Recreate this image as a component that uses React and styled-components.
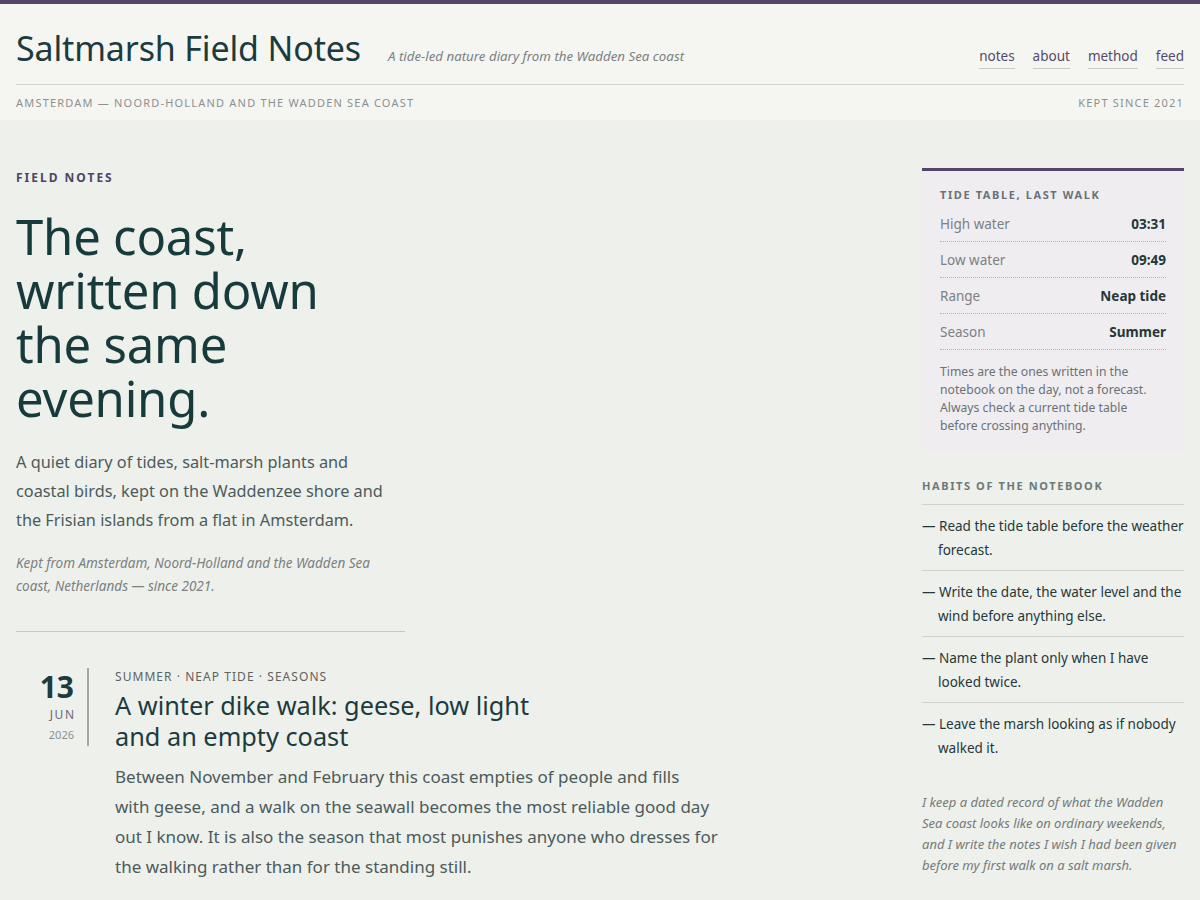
import React from 'react';
import styled, { createGlobalStyle } from 'styled-components';

const GlobalStyle = createGlobalStyle`
  html, body {
    margin: 0;
    padding: 0;
    background: #eef0eb;
    font-family: "Noto Sans", "Open Sans", sans-serif;
    color: #1f3d3d;
  }
  * { box-sizing: border-box; }
`;

const Header = styled.header`
  background: #f5f6f2;
  border-top: 4px solid #56456b;
  padding: 24px 16px 9px;
`;

const Masthead = styled.div`
  display: flex;
  align-items: baseline;
  padding-bottom: 15px;
  border-bottom: 1px solid #d3d6d1;
`;

const SiteTitle = styled.h1`
  margin: 0;
  font-size: 34px;
  line-height: 1.2;
  font-weight: 400;
  letter-spacing: -0.15px;
  color: #1c3b3d;
`;

const Tagline = styled.span`
  margin-left: 27px;
  font-size: 13.3px;
  font-style: italic;
  color: #7b8180;
`;

const Nav = styled.nav`
  margin-left: auto;
  display: flex;
  gap: 18px;
`;

const NavLink = styled.a`
  font-size: 13.5px;
  color: #55496a;
  text-decoration: none;
  padding-bottom: 3px;
  border-bottom: 1px solid #c9cbc7;
`;

const SubLine = styled.div`
  display: flex;
  justify-content: space-between;
  margin-top: 10px;
  font-size: 11px;
  line-height: 16px;
  letter-spacing: 1.2px;
  text-transform: uppercase;
  color: #8b918f;
`;

const Layout = styled.main`
  display: grid;
  grid-template-columns: 1fr 262px;
  gap: 40px;
  padding: 48px 16px 40px;
`;

const Primary = styled.div`
  min-width: 0;
  padding-top: 1px;
`;

const Intro = styled.section`
  width: 389px;
  padding-bottom: 33px;
  border-bottom: 1px solid #c6c9c4;
`;

const Kicker = styled.div`
  font-size: 12px;
  line-height: 18px;
  font-weight: 700;
  letter-spacing: 2px;
  text-transform: uppercase;
  color: #4f4561;
`;

const Hero = styled.h2`
  margin: 22px 0 0;
  font-size: 49px;
  line-height: 54px;
  font-weight: 400;
  letter-spacing: -0.2px;
  color: #173a3b;
`;

const Lede = styled.p`
  margin: 23px 0 0;
  font-size: 16.3px;
  line-height: 29px;
  color: #4b5b5b;
`;

const Aside = styled.p`
  margin: 17px 0 0;
  font-size: 13.5px;
  line-height: 23px;
  font-style: italic;
  color: #7a8180;
`;

const Entry = styled.article`
  display: flex;
  gap: 26px;
  margin-top: 36px;
`;

const DateBlock = styled.div`
  width: 73px;
  flex-shrink: 0;
  align-self: flex-start;
  padding-right: 13px;
  border-right: 2px solid #a6a8a5;
  text-align: right;
`;

const Day = styled.div`
  font-size: 30px;
  line-height: 38px;
  font-weight: 700;
  color: #1c3b3d;
`;

const Month = styled.div`
  font-size: 12px;
  line-height: 18px;
  letter-spacing: 1.5px;
  margin-right: -1.5px;
  color: #6e6680;
`;

const Year = styled.div`
  font-size: 11px;
  line-height: 22px;
  color: #8b918f;
`;

const EntryBody = styled.div`
  max-width: 603px;
`;

const Meta = styled.div`
  font-size: 12px;
  line-height: 18px;
  letter-spacing: 1.05px;
  text-transform: uppercase;
  color: #5d6363;
`;

const EntryTitle = styled.h3`
  margin: 4px 0 0;
  max-width: 440px;
  font-size: 25.3px;
  line-height: 31px;
  font-weight: 400;
  color: #1c3b3d;
`;

const EntryText = styled.p`
  margin: 10px 0 0;
  font-size: 17px;
  line-height: 30px;
  color: #4b5b5b;
`;

const Sidebar = styled.aside`
  display: flex;
  flex-direction: column;
`;

const TideBox = styled.section`
  background: #efedf0;
  border-top: 3px solid #56456b;
  padding: 16px 18px 17px;
`;

const BoxLabel = styled.div`
  font-size: 11px;
  line-height: 16px;
  font-weight: 700;
  letter-spacing: 1.6px;
  text-transform: uppercase;
  color: ${(p) => p.$color || '#6b7177'};
`;

const TideRows = styled.dl`
  margin: 3px 0 0;
`;

const TideRow = styled.div`
  display: flex;
  justify-content: space-between;
  padding: 8px 0 7px;
  border-bottom: 1px dotted #b4b3b8;
  font-size: 13.5px;
  line-height: 20px;
`;

const TideKey = styled.dt`
  color: #7b8184;
`;

const TideValue = styled.dd`
  margin: 0;
  font-weight: 700;
  color: #253839;
`;

const TideNote = styled.p`
  margin: 13px 0 0;
  font-size: 12.2px;
  line-height: 18px;
  color: #6b7177;
`;

const Habits = styled.section`
  margin-top: 26px;
`;

const HabitList = styled.ul`
  list-style: none;
  margin: 10px 0 0;
  padding: 0;
  border-top: 1px solid #cfd2cd;
`;

const Habit = styled.li`
  padding: 9px 0 8px 16px;
  text-indent: -16px;
  font-size: 13.5px;
  line-height: 24px;
  color: #253839;

  & + & {
    border-top: 1px solid #cfd2cd;
  }
`;

const Closing = styled.p`
  margin: 24px 0 0;
  font-size: 13px;
  line-height: 21px;
  font-style: italic;
  color: #737b7a;
`;

const tides = [
  ['High water', '03:31'],
  ['Low water', '09:49'],
  ['Range', 'Neap tide'],
  ['Season', 'Summer'],
];

const habits = [
  'Read the tide table before the weather forecast.',
  'Write the date, the water level and the wind before anything else.',
  'Name the plant only when I have looked twice.',
  'Leave the marsh looking as if nobody walked it.',
];

export default function App() {
  return (
    <>
      <GlobalStyle />
      <Header>
        <Masthead>
          <SiteTitle>Saltmarsh Field Notes</SiteTitle>
          <Tagline>A tide-led nature diary from the Wadden Sea coast</Tagline>
          <Nav>
            <NavLink href="#notes">notes</NavLink>
            <NavLink href="#about">about</NavLink>
            <NavLink href="#method">method</NavLink>
            <NavLink href="#feed">feed</NavLink>
          </Nav>
        </Masthead>
        <SubLine>
          <span>Amsterdam — Noord-Holland and the Wadden Sea coast</span>
          <span>Kept since 2021</span>
        </SubLine>
      </Header>

      <Layout>
        <Primary>
          <Intro>
            <Kicker>Field notes</Kicker>
            <Hero>The coast, written down the same evening.</Hero>
            <Lede>
              A quiet diary of tides, salt-marsh plants and coastal birds, kept
              on the Waddenzee shore and the Frisian islands from a flat in
              Amsterdam.
            </Lede>
            <Aside>
              Kept from Amsterdam, Noord-Holland and the Wadden Sea coast,
              Netherlands — since 2021.
            </Aside>
          </Intro>

          <Entry>
            <DateBlock>
              <Day>13</Day>
              <Month>JUN</Month>
              <Year>2026</Year>
            </DateBlock>
            <EntryBody>
              <Meta>Summer · Neap tide · Seasons</Meta>
              <EntryTitle>
                A winter dike walk: geese, low light and an empty coast
              </EntryTitle>
              <EntryText>
                Between November and February this coast empties of people and
                fills with geese, and a walk on the seawall becomes the most
                reliable good day out I know. It is also the season that most
                punishes anyone who dresses for the walking rather than for the
                standing still.
              </EntryText>
            </EntryBody>
          </Entry>
        </Primary>

        <Sidebar>
          <TideBox>
            <BoxLabel>Tide table, last walk</BoxLabel>
            <TideRows>
              {tides.map(([k, v]) => (
                <TideRow key={k}>
                  <TideKey>{k}</TideKey>
                  <TideValue>{v}</TideValue>
                </TideRow>
              ))}
            </TideRows>
            <TideNote>
              Times are the ones written in the notebook on the day, not a
              forecast. Always check a current tide table before crossing
              anything.
            </TideNote>
          </TideBox>

          <Habits>
            <BoxLabel $color="#6c7a77">Habits of the notebook</BoxLabel>
            <HabitList>
              {habits.map((h) => (
                <Habit key={h}>— {h}</Habit>
              ))}
            </HabitList>
          </Habits>

          <Closing>
            I keep a dated record of what the Wadden Sea coast looks like on
            ordinary weekends, and I write the notes I wish I had been given
            before my first walk on a salt marsh.
          </Closing>
        </Sidebar>
      </Layout>
    </>
  );
}
